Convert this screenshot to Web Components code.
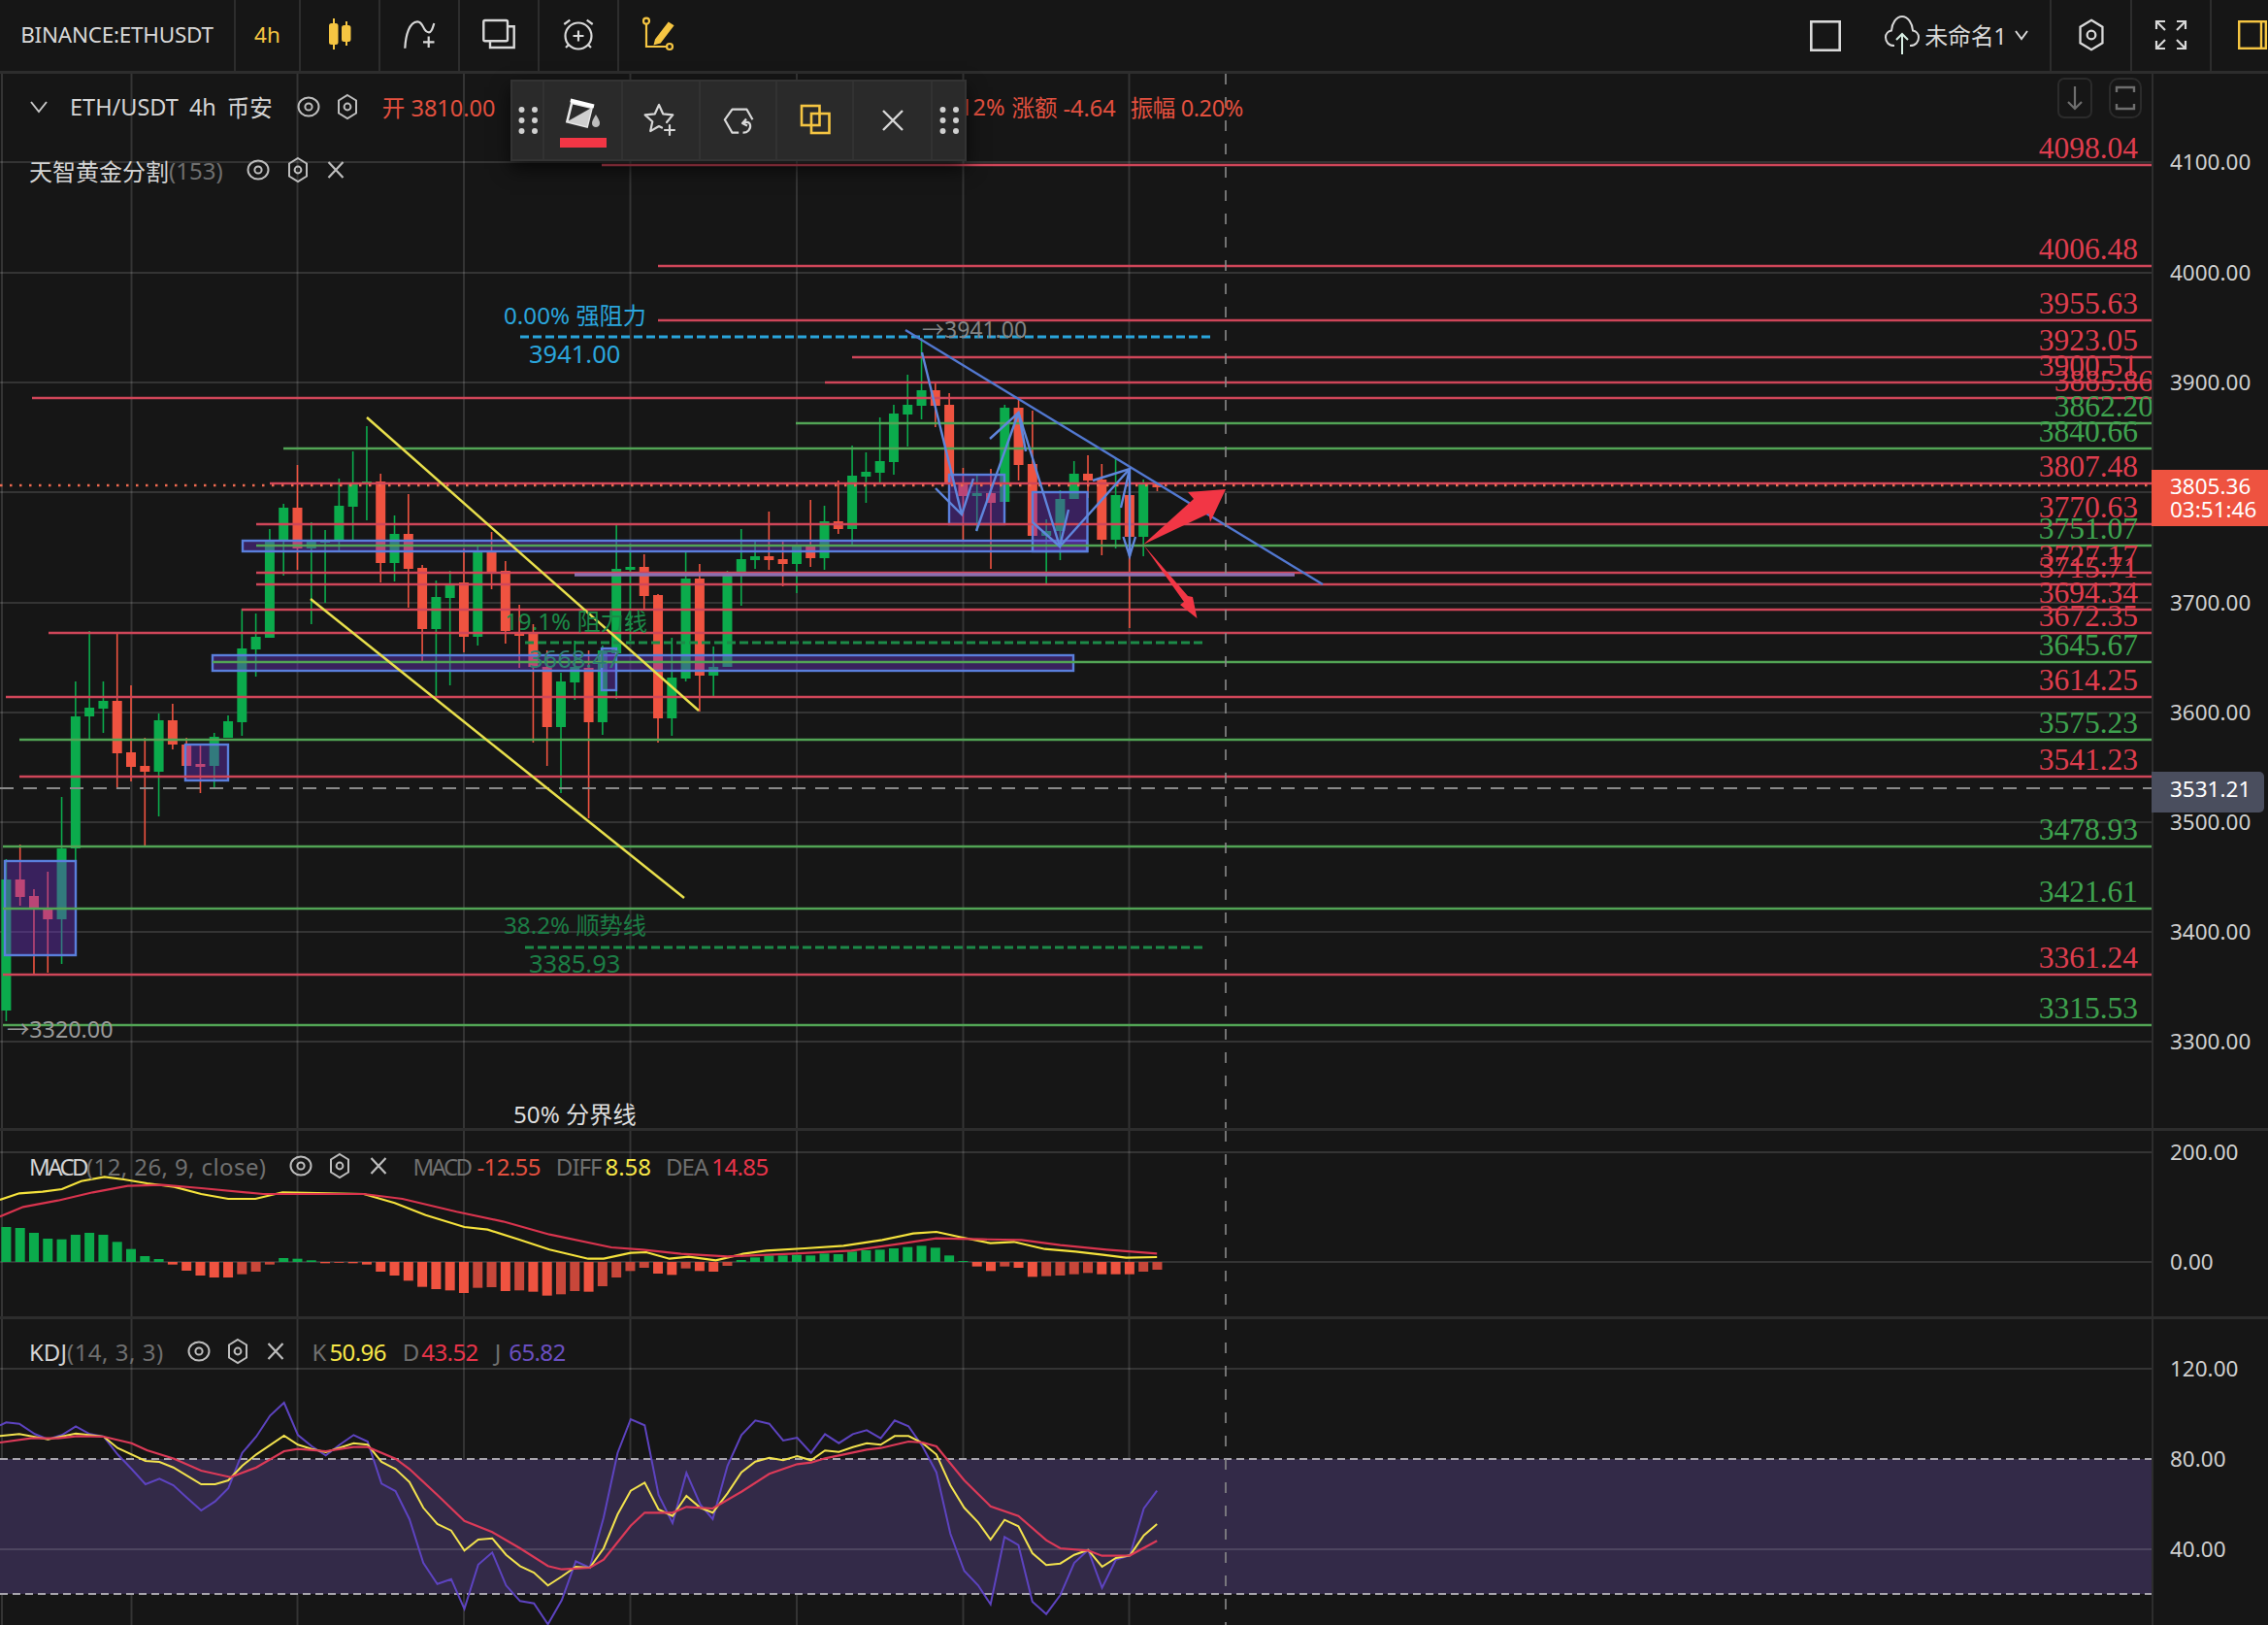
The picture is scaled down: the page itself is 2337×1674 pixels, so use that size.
<!DOCTYPE html>
<html lang="zh">
<head>
<meta charset="utf-8">
<title>ETH/USDT</title>
<style>
  html, body { margin: 0; background: #161616; }
  body { font-family: "Noto Sans", "Noto Sans CJK SC", sans-serif; color: #d4d4d4; }
</style>
</head>
<body>
<tv-app></tv-app>
<script>
const FONT = `"Noto Sans", "Noto Sans CJK SC", sans-serif`;
const RED = "#ef5340", GREEN = "#0bab4c", LINE_RED = "#cf4659", LINE_GREEN = "#52a455";
const GRID_X = [2, 135.5, 306.5, 478, 649.5, 821, 992.5, 1163.5];
const CROSS_X = 1263;
const AXIS_X = 2217;

// small icons shared by the legends and the bars
const ICONS = {
  eye: `<svg width="24" height="22" viewBox="0 0 24 22" fill="none" stroke="currentColor" stroke-width="2"><ellipse cx="12" cy="11" rx="10.5" ry="9.5"/><circle cx="12" cy="11" r="3.6"/></svg>`,
  hex: `<svg width="22" height="28" viewBox="0 0 22 28" fill="none" stroke="currentColor" stroke-width="2"><path d="M11 2 20 7.5V20.5L11 26 2 20.5V7.5Z"/><circle cx="11" cy="14" r="3.4"/></svg>`,
  close: `<svg width="20" height="20" viewBox="0 0 20 20" fill="none" stroke="currentColor" stroke-width="2.2"><path d="M2.5 2 17.5 18M17.5 2 2.5 18"/></svg>`,
  chevron: `<svg width="20" height="14" viewBox="0 0 20 14" fill="none" stroke="currentColor" stroke-width="2"><path d="M2 2 10 12 18 2"/></svg>`,
};

const px = (s) => s.map(([x, y]) => `${x},${y}`).join(" ");

class TvApp extends HTMLElement {
  constructor() {
    super();
    this.attachShadow({ mode: "open" });
  }

  connectedCallback() {
    this.shadowRoot.innerHTML = /* html */`
    <style>
      :host { display: flex; flex-direction: column; width: 2337px; height: 1674px; position: relative; overflow: hidden; background: #161616; }
      tv-float-bar { position: absolute; left: 526px; top: 82px; }
    </style>
    <tv-toolbar></tv-toolbar>
    <tv-pane height="1086" kind="main"></tv-pane>
    <tv-pane height="194" kind="macd" divided></tv-pane>
    <tv-pane height="318" kind="kdj" divided></tv-pane>
    <tv-float-bar></tv-float-bar>`;
  }
}

class TvTool extends HTMLElement {
  constructor() {
    super();
    this.attachShadow({ mode: "open" });
    this.shadowRoot.innerHTML = /* html */`
    <style>
      :host { display: flex; align-items: center; justify-content: center; gap: 5px; height: 100%; box-sizing: border-box; border-right: 2px solid #2d2d2d; flex: none; color: #d8d8d8; font-size: 22.5px; padding-bottom: 2px; }
      :host([bare]) { border-right: 0; }
      :host([gold]) { color: #f5c542; }
    </style>
    <slot></slot>`;
  }
}

class TvToolbar extends HTMLElement {
  constructor() {
    super();
    this.attachShadow({ mode: "open" });
  }

  connectedCallback() {
    this.shadowRoot.innerHTML = /* html */`
    <style>
      :host { display: flex; height: 76px; box-sizing: border-box; border-bottom: 3px solid #2d2d2d; flex: none; font-family: ${FONT}; }
      .spacer { flex: 1; display: flex; justify-content: flex-end; align-items: center; padding-right: 24px; }
      svg { display: block; overflow: visible; }
      .sym { letter-spacing: -0.25px; }
    </style>
    <tv-tool class="sym" style="width:243px">BINANCE:ETHUSDT</tv-tool>
    <tv-tool gold style="width:67px">4h</tv-tool>
    <tv-tool gold style="width:82px">
      <svg width="40" height="40" viewBox="0 0 40 40" fill="#f5c542" stroke="#f5c542" stroke-width="2"><path d="M14 3V35M27 6V31" fill="none"/><rect x="10" y="9" width="7.5" height="20" rx="1.5"/><rect x="23" y="11" width="7.5" height="15" rx="1.5"/></svg>
    </tv-tool>
    <tv-tool style="width:82px">
      <svg width="40" height="40" viewBox="0 0 40 40" fill="none" stroke="#d8d8d8" stroke-width="2.2"><path d="M5.3 33.7C6 20 10 6.5 18 6.3 25 6 23 17 30 17.3 33 17.5 34 12 35.3 8"/><path d="M29.7 21.5V33M24 27.3H35.5"/></svg>
    </tv-tool>
    <tv-tool style="width:82px">
      <svg width="40" height="40" viewBox="0 0 40 40" fill="none" stroke="#d8d8d8" stroke-width="2.4"><rect x="4.3" y="5" width="24.7" height="21.3" rx="1.5"/><path d="M29 11.3H35.7V33H11V26.3"/></svg>
    </tv-tool>
    <tv-tool style="width:82px">
      <svg width="40" height="40" viewBox="0 0 40 40" fill="none" stroke="#d8d8d8" stroke-width="2.2"><circle cx="20" cy="21" r="13.5"/><path d="M5.3 9 11.3 4.7M34.7 9 28.7 4.7M7 33 10.3 29.7M33 33 29.7 29.7M20 15.5V26.5M14.5 21H25.5"/></svg>
    </tv-tool>
    <tv-tool bare gold style="width:83px">
      <svg width="40" height="40" viewBox="0 0 40 40" fill="none" stroke="#f5c542" stroke-width="2.2"><circle cx="6" cy="5.7" r="3"/><path d="M6 8.7V32H27"/><circle cx="30" cy="32" r="3"/><path d="M16 25 29 8 33 10.5 20 27.5 15 29Z" fill="#f5c542"/></svg>
    </tv-tool>
    <div class="spacer">
      <svg width="32" height="32" viewBox="0 0 32 32" fill="none" stroke="#d8d8d8" stroke-width="2.6"><rect x="1.3" y="1.3" width="29.4" height="29.4"/></svg>
    </div>
    <tv-tool style="width:193px">
      <svg width="36" height="44" viewBox="0 0 36 44" fill="none" stroke="#d8d8d8" stroke-width="2"><path d="M10 33C4 33 1 29 1 24.500 1 20.500 4 18 7 17.500 7.500 10 12 3 18 3 24 3 28.500 10 29 17.500 32 18 35 20.500 35 24.500 35 29 32 33 26 33"/><path d="M18 42V21M12 27 18 21 24 27" stroke="#d8efe4"/></svg>
      <span style="font-size:24px;letter-spacing:-.3px">未命名1</span>
      <svg width="16" height="12" viewBox="0 0 16 12" fill="none" stroke="#d8d8d8" stroke-width="2" style="margin-left:2px"><path d="M2 2 8 10 14 2"/></svg>
    </tv-tool>
    <tv-tool style="width:83px">
      <svg width="28" height="36" viewBox="0 0 22 28" fill="none" stroke="#d8d8d8" stroke-width="1.8"><path d="M11 2 20 7.500V20.500L11 26 2 20.500V7.500Z"/><circle cx="11" cy="14" r="3.400"/></svg>
    </tv-tool>
    <tv-tool style="width:82px">
      <svg width="32" height="30" viewBox="0 0 32 30" fill="none" stroke="#d8d8d8" stroke-width="2.2"><path d="M1 9V1H10M1 1 10 10M31 9V1H22M31 1 22 10M1 21V29H10M1 29 10 20M31 21V29H22M31 29 22 20"/></svg>
    </tv-tool>
    <tv-tool bare style="width:58px;justify-content:flex-start;padding-left:27px">
      <svg width="30" height="30" viewBox="0 0 30 30" fill="none" stroke="#f5c542" stroke-width="2.4"><rect x="1.200" y="1.200" width="27.600" height="27.600"/><path d="M24 1V29"/></svg>
    </tv-tool>`;
  }
}

class TvFloatBar extends HTMLElement {
  constructor() {
    super();
    this.attachShadow({ mode: "open" });
  }

  connectedCallback() {
    const dots = /* html */`<svg width="20" height="30" viewBox="0 0 20 30" fill="#d0d0d0"><circle cx="3.500" cy="4" r="3"/><circle cx="17" cy="4" r="3"/><circle cx="3.500" cy="15" r="3"/><circle cx="17" cy="15" r="3"/><circle cx="3.500" cy="26" r="3"/><circle cx="17" cy="26" r="3"/></svg>`;
    this.shadowRoot.innerHTML = /* html */`
    <style>
      :host { display: grid; grid-template-columns: 33px 81px 80px 79px 79px 81px 33px; width: 470px; height: 84px; box-sizing: border-box; background: #2a2a2a; border: 2px solid #333; box-shadow: 0 8px 18px rgba(0,0,0,.65); }
      .cell { display: flex; align-items: center; justify-content: center; border-right: 2px solid #323232; position: relative; }
      .cell:last-child { border-right: 0; }
      .bar { position: absolute; left: 16px; right: 15px; bottom: 12px; height: 10px; background: #f23645; }
      .paint svg { margin-top: -12px; }
    </style>
    <div class="cell">${dots}</div>
    <div class="cell paint">
      <svg width="40" height="40" viewBox="0 0 40 40">
        <g transform="rotate(14 16 18)"><path d="M6 10H27V30H6Z" fill="#2a2a2a" stroke="#e8e8e8" stroke-width="2.600"/><path d="M6 30 27 10V30Z" fill="#cfcfcf"/><path d="M4 8H29" stroke="#fff" stroke-width="4"/></g>
        <path d="M33 20C36 25 37 27 37 29 37 31.500 35 33 33 33 31 33 29 31.500 29 29 29 27 30 25 33 20Z" fill="#bdbdbd"/>
      </svg>
      <div class="bar"></div>
    </div>
    <div class="cell">
      <svg width="36" height="36" viewBox="0 0 36 36" fill="none" stroke="#d8d8d8" stroke-width="2.200" stroke-linejoin="round" stroke-linecap="round"><path d="M24 20 30.300 12.400 20.200 11.300 16 2 11.800 11.300 1.700 12.400 9.300 19.200 7.200 29.100 16 24 19 25.500"/><path d="M27 23V33M22 28H32"/></svg>
    </div>
    <div class="cell">
      <svg width="38" height="38" viewBox="0 0 38 38" fill="none" stroke="#d8d8d8" stroke-width="2.200" stroke-linejoin="round"><path d="M33.500 18.300 27.500 7.700H12.500L4.800 18.300 12.500 31.700H19.200"/><path d="M23.500 31.700C28 32 32 28 31 23.500 30 20 26 20.500 24.200 22M27 17.500 23 22 28 24.500"/></svg>
    </div>
    <div class="cell">
      <svg width="34" height="34" viewBox="0 0 34 34" fill="none" stroke="#f5c542" stroke-width="2.600"><rect x="3" y="2" width="18.500" height="20"/><rect x="13" y="10" width="18.500" height="20"/></svg>
    </div>
    <div class="cell">
      <svg width="26" height="26" viewBox="0 0 26 26" fill="none" stroke="#d8d8d8" stroke-width="2.400"><path d="M3 3 23 23M23 3 3 23"/></svg>
    </div>
    <div class="cell">${dots}</div>`;
  }
}

// a price pane: drawing on the left, scale on the right
class TvPane extends HTMLElement {
  constructor() {
    super();
    this.attachShadow({ mode: "open" });
  }

  connectedCallback() {
    const kind = this.getAttribute("kind");
    const h = this.getAttribute("height");
    const canvas = { main: "tv-main-chart", macd: "tv-macd-chart", kdj: "tv-kdj-chart" }[kind];
    this.shadowRoot.innerHTML = /* html */`
    <style>
      :host { display: grid; grid-template-columns: ${AXIS_X}px 1fr; height: ${h}px; box-sizing: border-box; position: relative; flex: none; }
      :host([divided]) { border-top: 3px solid #2d2d2d; }
      tv-legend { position: absolute; }
      .btn { position: absolute; top: 4px; height: 42px; box-sizing: border-box; border: 2px solid #2b2b2b; border-radius: 7px; display: flex; align-items: center; justify-content: center; }
    </style>
    <${canvas}></${canvas}>
    <tv-axis kind="${kind}"></tv-axis>
    ${this.overlays(kind)}`;
  }

  overlays(kind) {
    const t = (s, c, ml, ls = 0) => `<span style="color:${c};margin-left:${ml}px;letter-spacing:${ls}px">${s}</span>`;
    const dim = "#6f6f6f";
    if (kind === "main") return /* html */`
      <tv-legend style="left:30px;top:19px;font-size:23.5px">
        <span class="ico" style="margin-right:22px;color:#c8c8c8">${ICONS.chevron}</span>
        <span>ETH/USDT</span>${t("4h", "#d4d4d4", 11)}${t("币安", "#d4d4d4", 11)}
        <span class="ico" style="margin-left:25px">${ICONS.eye}</span>
        <span class="ico" style="margin-left:17px">${ICONS.hex}</span>
        ${t("开 3810.00", "#e2503f", 25)}
      </tv-legend>
      <tv-legend style="left:989px;top:19px;font-size:23.5px">
        ${t("12%", "#e2503f", 0)}${t("涨额 -4.64", "#e2503f", 7)}${t("振幅 0.20%", "#e2503f", 15, -0.4)}
      </tv-legend>
      <tv-legend style="left:30px;top:84px">
        <span>天智黄金分割</span><span style="color:${dim}">(153)</span>
        <span class="ico" style="margin-left:24px">${ICONS.eye}</span>
        <span class="ico" style="margin-left:18px">${ICONS.hex}</span>
        <span class="ico" style="margin-left:18px">${ICONS.close}</span>
      </tv-legend>
      <div class="btn" style="left:2120px;width:36px"><svg width="20" height="28" viewBox="0 0 20 28" fill="none" stroke="#6e6e6e" stroke-width="2.200"><path d="M10 2V25M3 18 10 25 17 18"/></svg></div>
      <div class="btn" style="left:2173px;width:34px;border-radius:10px"><svg width="22" height="28" viewBox="0 0 22 28" fill="none" stroke="#6e6e6e" stroke-width="2.400"><path d="M2 8V3H20V8M2 20V25H20V20"/></svg></div>`;
    if (kind === "macd") return /* html */`
      <tv-legend style="left:30px;top:21px">
        <span style="letter-spacing:-2.600px">MACD</span><span style="color:${dim};letter-spacing:.4px">(12, 26, 9, close)</span>
        <span class="ico" style="margin-left:24px">${ICONS.eye}</span>
        <span class="ico" style="margin-left:17px">${ICONS.hex}</span>
        <span class="ico" style="margin-left:19px">${ICONS.close}</span>
        <span style="color:${dim};margin-left:25px;letter-spacing:-2.600px">MACD</span>${t("-12.55", "#e2503f", 7, -0.6)}
        ${t("DIFF", dim, 16, -1)}${t("8.58", "#f7e748", 4)}
        ${t("DEA", dim, 15, -1)}${t("14.85", "#e8344a", 4, -0.6)}
      </tv-legend>`;
    return /* html */`
      <tv-legend style="left:30px;top:18px">
        <span>KDJ</span><span style="color:${dim};letter-spacing:.5px">(14, 3, 3)</span>
        <span class="ico" style="margin-left:24px">${ICONS.eye}</span>
        <span class="ico" style="margin-left:17px">${ICONS.hex}</span>
        <span class="ico" style="margin-left:18px">${ICONS.close}</span>
        ${t("K", dim, 28)}${t("50.96", "#f7e748", 3, -0.6)}
        ${t("D", dim, 17)}${t("43.52", "#e8344a", 2, -0.6)}
        ${t("J", dim, 17)}${t("65.82", "#6a4fc0", 8, -0.6)}
      </tv-legend>`;
  }
}

class TvLegend extends HTMLElement {
  constructor() {
    super();
    this.attachShadow({ mode: "open" });
    this.shadowRoot.innerHTML = /* html */`
    <style>
      :host { display: flex; align-items: center; height: 30px; white-space: nowrap; font-family: ${FONT}; font-size: 24px; color: #d4d4d4; }
      ::slotted(.ico) { display: flex; align-items: center; color: #bdbdbd; }
    </style>
    <slot></slot>`;
  }
}

class TvAxis extends HTMLElement {
  static TICKS = {
    main: [["4100.00", 167], ["4000.00", 281], ["3900.00", 394], ["3700.00", 621], ["3600.00", 734], ["3500.00", 847], ["3400.00", 960], ["3300.00", 1073]],
    macd: [["200.00", 1187], ["0.00", 1300]],
    kdj: [["120.00", 1410], ["80.00", 1503], ["40.00", 1596]],
  };

  constructor() {
    super();
    this.attachShadow({ mode: "open" });
  }

  connectedCallback() {
    const kind = this.getAttribute("kind");
    const top = { main: 76, macd: 1165, kdj: 1359 }[kind];
    const ticks = TvAxis.TICKS[kind].map(([s, y]) => `<div class="tick" style="top:${y - top - 15}px">${s}</div>`).join("");
    const extra = kind !== "main" ? "" : /* html */`
      <div class="tag last" style="top:${484 - top}px">3805.36<br>03:51:46</div>
      <div class="tag cross" style="top:${795 - top}px">3531.21</div>`;
    this.shadowRoot.innerHTML = /* html */`
    <style>
      :host { display: block; position: relative; box-sizing: border-box; border-left: 2px solid #2d2d2d; font-family: ${FONT}; font-size: 22.500px; color: #cfcfcf; }
      .tick { position: absolute; left: 17px; height: 30px; line-height: 30px; }
      .tag { position: absolute; left: -2px; box-sizing: border-box; color: #fff; padding-left: 19px; }
      .last { width: 120px; height: 58px; background: #ee5340; line-height: 24px; padding-top: 5px; }
      .cross { width: 116px; height: 42px; line-height: 36px; background: #4a4e5e; border-radius: 0 5px 5px 0; }
    </style>
    ${ticks}${extra}`;
  }
}

// shared drawing base: svg in page coordinates
class TvCanvas extends HTMLElement {
  constructor() {
    super();
    this.attachShadow({ mode: "open" });
  }

  frame(top, height, body) {
    const grid = GRID_X.map((x) => `<path d="M${x} ${top}V${top + height}" stroke="rgba(255,255,255,.13)" stroke-width="2"/>`).join("");
    const cross = `<path d="M${CROSS_X} ${top}V${top + height}" stroke="#8a8a8a" stroke-width="1.600" stroke-dasharray="11 13"/>`;
    this.shadowRoot.innerHTML = /* html */`
    <style>
      :host { display: block; overflow: hidden; }
      svg { display: block; width: ${AXIS_X}px; height: ${height}px; }
      text { font-family: ${FONT}; font-size: 24.200px; }
      .lvl { font-family: "Liberation Serif", serif; font-size: 31.500px; text-anchor: end; }
    </style>
    <svg viewBox="0 ${top} ${AXIS_X} ${height}" fill="none">${grid}${body}${cross}</svg>`;
  }
}

// colour, high, body top, body bottom, wick low, in page pixels
const CANDLES = [
  "g885,906,1041,1052", "r870,906,924,933", "r916,923,937,1005", "r898,936,947,1002", "g821,874,947,993",
  "g702,738,874,887", "g650,729,738,762", "g702,722,730,755", "r653,722,776,813", "r706,775,790,805",
  "r760,789,795,873", "g735,742,795,841", "r725,742,767,772", "r760,767,789,789", "r768,787,789,817",
  "g755,759,789,812", "g737,743,760,760", "g627,668,744,758", "g632,656,669,697", "g545,557,657,657",
  "g519,523,557,593", "r479,523,565,587", "g538,557,565,643", "g546,556,557,621", "g493,521,557,567",
  "g465,499,522,557", "g439,496,498,536", "r488,496,580,600", "g531,550,580,599", "r509,550,586,626",
  "r582,585,648,681", "g598,615,648,717", "g588,601,616,706", "r565,600,656,672", "g562,568,656,665",
  "r548,568,590,607", "r578,588,650,663", "r623,652,655,688", "r643,652,687,765", "r670,687,749,789",
  "g693,702,749,817", "g660,687,703,721", "r670,688,744,843", "g665,670,744,757", "g541,586,673,720",
  "g560,584,586,660", "r571,584,614,627", "r612,613,740,765", "g657,698,740,758", "g568,596,699,702",
  "r581,596,696,733", "g666,687,696,717", "g588,592,687,687", "g545,576,592,624", "g556,573,577,586",
  "r527,573,577,587", "r558,576,581,604", "g562,563,581,611", "r515,563,575,584", "g521,537,575,587",
  "r495,537,545,550", "g459,490,545,563", "g466,486,491,518", "g430,475,487,497", "g417,426,476,489",
  "g386,417,427,460", "g348,402,418,432", "r393,402,418,440", "r405,417,497,497", "r482,497,511,558",
  "g490,508,511,547", "r483,508,518,586", "g417,420,517,517", "r412,420,479,495", "r423,478,552,552",
  "g535,547,552,601", "g505,514,547,577", "g475,488,514,514", "r469,488,495,513", "r478,494,556,572",
  "g472,510,556,565", "r490,510,553,647", "g494,497,553,573", "r497,499,501,506",
];
const candleX = (i) => 6.4 + 14.29 * i;

// price, line y, line start x, r/g, label right edge
const LEVELS = [
  ["4098.04", 170, 620, "r"], ["4006.48", 274, 678, "r"], ["3955.63", 330, 678, "r"], ["3923.05", 368, 878, "r"],
  ["3900.51", 394, 850, "r"], ["3885.86", 410, 33, "r", 2219], ["3862.20", 436, 820, "g", 2219], ["3840.66", 462, 292, "g"],
  ["3807.48", 498, 278, "r"], ["3770.63", 540, 264, "r"], ["3751.07", 562, 264, "g"], ["3727.17", 590, 264, "r"],
  ["3715.71", 602, 264, "r"], ["3694.34", 628, 249, "r"], ["3672.35", 652, 50, "r"], ["3645.67", 682, 219, "g"],
  ["3614.25", 718, 6, "r"], ["3575.23", 762, 20, "g"], ["3541.23", 800, 20, "r"], ["3478.93", 872, 3, "g"],
  ["3421.61", 936, 3, "g"], ["3361.24", 1004, 3, "r"], ["3315.53", 1056, 3, "g"],
];

const BOXES = [[250, 557, 1120, 568], [219, 675, 1106, 691], [191, 767, 235, 804], [5, 887, 78, 984], [620, 668, 635, 711], [978, 489, 1035, 540], [1064, 507, 1120.5, 568]];

class TvMainChart extends TvCanvas {
  connectedCallback() {
    let s = "";
    [281, 394, 507, 621, 734, 847, 960, 1073, 167].forEach((y) => {
      s += `<path d="M0 ${y}H${AXIS_X}" stroke="rgba(255,255,255,.13)" stroke-width="2"/>`;
    });
    CANDLES.forEach((c, i) => {
      const col = c[0] === "g" ? GREEN : RED;
      const [hi, top, bot, lo] = c.slice(1).split(",").map(Number);
      const x = candleX(i);
      s += `<path d="M${x} ${hi}V${lo}" stroke="${col}" stroke-width="1.600"/>`;
      s += `<rect x="${x - 5}" y="${top}" width="10" height="${Math.max(bot - top, 3)}" fill="${col}"/>`;
    });
    BOXES.forEach(([x1, y1, x2, y2]) => {
      s += `<rect x="${x1}" y="${y1}" width="${x2 - x1}" height="${y2 - y1}" fill="rgba(110,50,200,.4)" stroke="#5a7fdc" stroke-width="2.400"/>`;
    });
    LEVELS.forEach(([label, y, x0, c, end]) => {
      s += `<path d="M${x0} ${y}H${AXIS_X}" stroke="${c === "r" ? LINE_RED : LINE_GREEN}" stroke-width="2.400"/>`;
      s += `<text class="lvl" x="${end || 2203}" y="${y - 7}" fill="${c === "r" ? "#df3d4e" : "#3ea24f"}">${label}</text>`;
    });
    s += `<path d="M592 592H1334" stroke="#8d6fb0" stroke-width="3.500"/>`;
    s += `<path d="M0 500H${AXIS_X}" stroke="#ee6a50" stroke-width="2.400" stroke-dasharray="2.500 7.500"/>`;
    s += `<path d="M0 812H${AXIS_X}" stroke="#8a8a8a" stroke-width="2.200" stroke-dasharray="14 10"/>`;
    // fib lines
    s += `<path d="M536 347H1248" stroke="#2aa5dc" stroke-width="3" stroke-dasharray="9 4"/>`;
    s += `<path d="M541 662H1242" stroke="#1c8a48" stroke-width="3" stroke-dasharray="9 4"/>`;
    s += `<path d="M541 976H1241" stroke="#1c8a48" stroke-width="3" stroke-dasharray="9 4"/>`;
    // trend lines
    s += `<path d="M378 430 720 732M320 617 705 925" stroke="#e8df4c" stroke-width="2.500"/>`;
    s += `<path d="M933 340 1363 602" stroke="#5278d0" stroke-width="2.400"/>`;
    const zig = [
      [[950, 363], [991, 530]], [[964, 503], [991, 530], [1003, 493]], [[1006, 547], [1049.5, 425]], [[1020, 452], [1049.5, 425], [1057, 465]],
      [[1049.5, 425], [1092, 563]], [[1064, 538], [1092, 563], [1101, 525]], [[1092, 563], [1164, 483]], [[1126, 495], [1164, 483], [1155, 523]],
      [[1164, 483], [1164, 573]], [[1157.500, 553], [1164, 573], [1170, 553]],
    ];
    zig.forEach((p) => { s += `<polyline points="${px(p)}" stroke="#5f86dc" stroke-width="2.400"/>`; });
    // hand drawn arrows
    s += `<polygon points="1178,561 1230,514 1224,507 1263,504 1247,538 1245.500,529" fill="#f23645"/>`;
    s += `<polygon points="1178,561 1224,614 1229,615 1233.500,637 1216,623 1220,620" fill="#f23645"/>`;
    // annotation texts
    const note = (x, y, str, fill, extra = "") => `<text x="${x}" y="${y}" fill="${fill}" ${extra}>${str}</text>`;
    s += note(519, 334, "0.00% 强阻力", "#2aa5dc");
    s += note(545, 374, "3941.00", "#2aa5dc", `style="font-size:25.5px"`);
    s += note(950, 348, "→3941.00", "#858585", `style="font-size:23px"`);
    s += note(520, 649, "19.1% 阻力线", "#1c8a48");
    s += note(545, 688, "3668.47", "#2f7f70", `style="font-size:25.5px"`);
    s += note(519, 962, "38.2% 顺势线", "#1c7c45");
    s += note(545, 1002, "3385.93", "#1c7c45", `style="font-size:25.5px"`);
    s += note(529, 1157, "50% 分界线", "#dedede");
    s += note(7, 1069, "→3320.00", "#9a9a9a", `style="font-size:23.3px"`);
    this.frame(76, 1086, s);
  }
}

// bar heights from zero, green up, red down
const HIST = [108,105,90,72,70,84,90,84,62,40,18,9,-8,-27,-42,-48,-48,-38,-30,-8,12,10,5,-4,-3,-4,-8,-30,-42,-58,-77,-84,-88,-96,-80,-78,-90,-88,-92,-104,-100,-90,-92,-75,-48,-28,-18,-36,-40,-20,-28,-30,-12,6,14,20,20,22,20,26,24,32,36,38,42,46,50,44,20,3,-14,-28,-14,-18,-46,-44,-42,-38,-34,-38,-38,-38,-30,-24];
const DIFF = [[0,258],[25,238],[55,233],[80,225],[105,200],[135,187],[160,195],[190,207],[225,218],[260,240],[295,255],[330,255],[365,235],[410,237],[470,240],[510,268],[550,305],[600,342],[630,350],[670,380],[710,412],[760,440],[780,440],[815,422],[835,420],[865,440],[890,434],[925,445],[960,425],[990,415],[1040,408],[1090,400],[1140,382],[1180,362],[1210,357],[1240,373],[1280,392],[1310,388],[1350,410],[1390,418],[1425,428],[1455,437],[1495,435]];
const DEA = [[0,310],[30,280],[75,260],[120,235],[165,215],[210,212],[260,222],[340,240],[400,240],[470,240],[520,255],[590,295],[650,325],[710,365],[790,405],[830,412],[880,425],[940,433],[1020,425],[1100,415],[1160,395],[1210,377],[1270,380],[1320,382],[1370,398],[1430,412],[1495,424]];

const zoomed = (pts, y0) => px(pts.map(([x, y]) => [(x / 1.254).toFixed(1), (y0 + y / 3).toFixed(1)]));

class TvMacdChart extends TvCanvas {
  connectedCallback() {
    let s = `<path d="M0 1187H${AXIS_X}M0 1300H${AXIS_X}" stroke="rgba(255,255,255,.13)" stroke-width="2"/>`;
    HIST.forEach((v, i) => {
      const h = Math.abs(v) / 3;
      const x = candleX(i) - 5;
      const weak = i > 0 && Math.abs(v) < Math.abs(HIST[i - 1]) && Math.sign(v) === Math.sign(HIST[i - 1]);
      const col = v > 0 ? GREEN : weak ? "#c8473a" : RED;
      s += `<rect x="${x}" y="${v > 0 ? 1300 - h : 1300}" width="10" height="${h}" fill="${col}"/>`;
    });
    s += `<polyline points="${zoomed(DIFF, 1150)}" stroke="#f5e23c" stroke-width="2.200"/>`;
    s += `<polyline points="${zoomed(DEA, 1150)}" stroke="#d9344e" stroke-width="2.200"/>`;
    this.frame(1165, 191, s);
  }
}

const KDJ_J = [[0,295],[8,286],[25,290],[45,322],[62,338],[80,325],[98,298],[116,322],[134,330],[152,385],[170,430],[188,477],[206,460],[224,480],[242,520],[260,558],[278,530],[295,490],[313,380],[331,330],[349,265],[367,225],[385,325],[403,360],[421,388],[439,355],[457,325],[475,345],[493,475],[511,498],[529,585],[547,720],[565,785],[583,770],[600,862],[618,725],[636,688],[654,790],[672,838],[690,845],[708,910],[726,835],[744,715],[762,735],[780,580],[798,380],[815,276],[833,295],[851,510],[869,597],[887,442],[905,540],[921,585],[940,420],[958,325],[976,280],[994,290],[1012,342],[1030,333],[1048,380],[1066,322],[1084,350],[1102,322],[1120,310],[1138,335],[1156,280],[1174,298],[1192,360],[1210,440],[1228,630],[1246,745],[1264,790],[1280,848],[1298,640],[1316,665],[1334,840],[1352,878],[1370,820],[1388,720],[1406,680],[1424,797],[1442,710],[1460,697],[1478,552],[1495,497]];
const KDJ_K = [[0,328],[25,322],[62,338],[98,320],[134,330],[152,365],[188,405],[206,408],[224,425],[260,477],[278,477],[295,465],[313,420],[331,385],[367,327],[385,355],[403,368],[421,378],[457,350],[475,355],[493,408],[511,430],[529,470],[547,550],[565,600],[583,620],[600,682],[618,648],[636,644],[654,695],[672,730],[690,750],[708,790],[726,762],[744,732],[762,735],[780,675],[798,570],[815,497],[833,472],[851,555],[869,575],[887,513],[905,550],[921,565],[940,505],[958,440],[976,407],[994,395],[1012,403],[1030,390],[1048,403],[1066,373],[1084,377],[1102,362],[1120,350],[1138,355],[1156,328],[1174,328],[1192,350],[1210,385],[1228,480],[1246,550],[1264,595],[1280,648],[1298,587],[1316,607],[1334,690],[1352,727],[1370,722],[1388,695],[1406,680],[1424,732],[1442,705],[1460,697],[1478,635],[1495,600]];
const KDJ_D = [[0,348],[40,335],[75,335],[100,328],[134,330],[170,350],[190,372],[225,398],[260,435],[298,455],[331,425],[367,375],[385,368],[421,375],[457,362],[475,362],[511,398],[529,430],[565,510],[600,590],[636,625],[672,675],[708,730],[726,740],[762,735],[780,710],[815,605],[833,565],[869,565],[887,547],[921,552],[958,500],[994,445],[1030,415],[1048,410],[1066,397],[1120,370],[1138,365],[1174,345],[1192,348],[1210,360],[1246,465],[1280,545],[1316,575],[1352,650],[1370,675],[1406,682],[1424,698],[1460,697],[1495,652]];

class TvKdjChart extends TvCanvas {
  connectedCallback() {
    let s = `<rect x="0" y="1503" width="${AXIS_X}" height="139" fill="#332a48"/>`;
    s += `<path d="M0 1410H${AXIS_X}M0 1596H${AXIS_X}" stroke="rgba(255,255,255,.13)" stroke-width="2"/>`;
    s += `<path d="M0 1503H${AXIS_X}M0 1642H${AXIS_X}" stroke="#a8a5ad" stroke-width="2" stroke-dasharray="8 5"/>`;
    s += `<polyline points="${zoomed(KDJ_J, 1370)}" stroke="#5d43c0" stroke-width="2"/>`;
    s += `<polyline points="${zoomed(KDJ_K, 1370)}" stroke="#f2e24e" stroke-width="2"/>`;
    s += `<polyline points="${zoomed(KDJ_D, 1370)}" stroke="#dc3a58" stroke-width="2.200"/>`;
    this.frame(1359, 315, s);
  }
}

customElements.define("tv-tool", TvTool);
customElements.define("tv-toolbar", TvToolbar);
customElements.define("tv-float-bar", TvFloatBar);
customElements.define("tv-legend", TvLegend);
customElements.define("tv-axis", TvAxis);
customElements.define("tv-main-chart", TvMainChart);
customElements.define("tv-macd-chart", TvMacdChart);
customElements.define("tv-kdj-chart", TvKdjChart);
customElements.define("tv-pane", TvPane);
customElements.define("tv-app", TvApp);
</script>
</body>
</html>
